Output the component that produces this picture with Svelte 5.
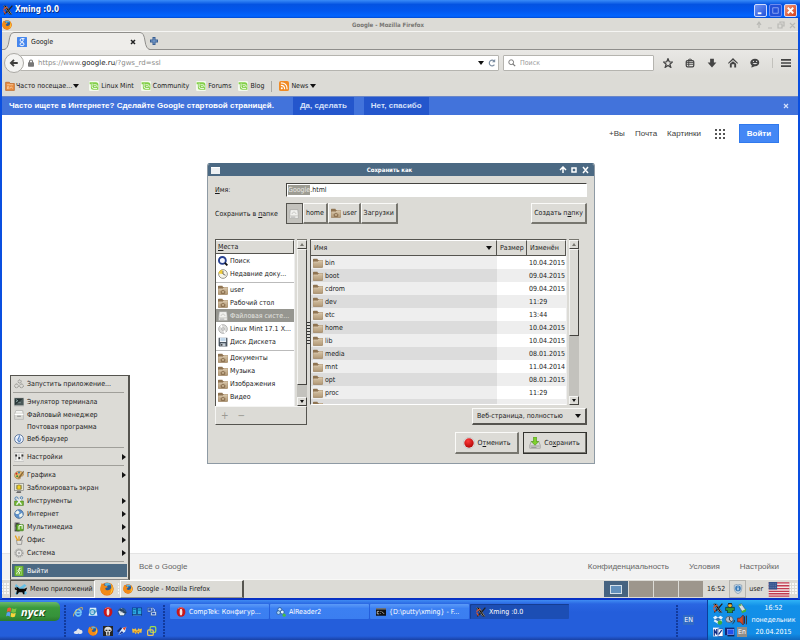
<script>
  const bookmarks = ['Linux Mint', 'Community', 'Forums', 'Blog'];

  const places = [
    { icon: 'search', name: 'Поиск' },
    { icon: 'recent', name: 'Недавние доку...', last: true },
    { icon: 'home-folder', name: 'user' },
    { icon: 'home-folder', name: 'Рабочий стол' },
    { icon: 'drive', name: 'Файловая систе...', selected: true },
    { icon: 'disc', name: 'Linux Mint 17.1 X...' },
    { icon: 'floppy', name: 'Диск Дискета', last: true },
    { icon: 'home-folder', name: 'Документы' },
    { icon: 'home-folder', name: 'Музыка' },
    { icon: 'home-folder', name: 'Изображения' },
    { icon: 'home-folder', name: 'Видео' }
  ];

  // the last row only peeks out from under the edge of the list
  const files = [
    ['bin', '10.04.2015'],
    ['boot', '09.04.2015'],
    ['cdrom', '09.04.2015'],
    ['dev', '11:29'],
    ['etc', '13:44'],
    ['home', '10.04.2015'],
    ['lib', '10.04.2015'],
    ['media', '08.01.2015'],
    ['mnt', '11.04.2014'],
    ['opt', '08.01.2015'],
    ['proc', '11:29'],
    ['', '']
  ];

  const menu = [
    { icon: 'gears', name: 'Запустить приложение...', last: true },
    { icon: 'terminal', name: 'Эмулятор терминала' },
    { icon: 'cabinet', name: 'Файловый менеджер' },
    { name: 'Почтовая программа' },
    { icon: 'compass', name: 'Веб-браузер', last: true },
    { icon: 'sliders', name: 'Настройки', sub: true, last: true },
    { icon: 'palette', name: 'Графика', sub: true },
    { icon: 'lock-screen', name: 'Заблокировать экран' },
    { icon: 'tools', name: 'Инструменты', sub: true },
    { icon: 'globe', name: 'Интернет', sub: true },
    { icon: 'media', name: 'Мультимедиа', sub: true },
    { icon: 'office', name: 'Офис', sub: true },
    { icon: 'gear', name: 'Система', sub: true, last: true },
    { icon: 'exit', name: 'Выйти', active: true }
  ];

  const quick = ['ie', 'outlook', 'opera', 'bird', 'columns', 'network', 'cloud', 'firefox', 'skull', 'rocket', 'bat', 'vmware'];
  const tray = ['xming', 'agent', 'usb', 'dropbox', 'mouse', 'speaker', 'cards', 'monitor'];

  const tasks = [
    { icon: 'opera', name: 'CompTek: Конфигур...' },
    { icon: 'reader', name: 'AlReader2' },
    { icon: 'console', name: '{D:\\putty\\xming} - F...' },
    { icon: 'xming', name: 'Xming :0.0', active: true }
  ];

  let filename = $state('.html');
</script>

{#snippet icon(name)}
  <svg class="icon" viewBox="0 0 16 16" aria-hidden="true"><use href="#{name}" /></svg>
{/snippet}

<svg class="defs" aria-hidden="true">
  <defs>
    <linearGradient id="folderFill" x1="0" y1="0" x2="0" y2="1">
      <stop offset="0" stop-color="#d6c3a6" /><stop offset="1" stop-color="#b39b78" />
    </linearGradient>
    <radialGradient id="redFill" cx=".4" cy=".3" r=".8">
      <stop offset="0" stop-color="#ff3a3a" /><stop offset="1" stop-color="#a80000" />
    </radialGradient>
  </defs>
  <symbol id="xming" viewBox="0 0 16 16">
    <path d="M0 1h6l9 14h-5z" fill="#111" /><path d="M1 1l10 14M5 1l9 14" stroke="#c4c4c4" stroke-width="1" />
    <path d="M15 1L9 8M7 10l-5 5" stroke="#222" stroke-width="2" /><path d="M1 8c1-4 4-5 6-3M1 9l3 5" fill="none" stroke="#e0522c" stroke-width="1.8" />
  </symbol>
  <symbol id="firefox" viewBox="0 0 16 16">
    <circle cx="8" cy="8" r="7.5" fill="#e66a10" /><circle cx="8.5" cy="6.5" r="5" fill="#245c9e" />
    <path d="M5 2c3-2 7-1 8 2-3-1-5 0-6 1z" fill="#60b4dc" />
    <path d="M1 4l1-3 3 3c2 0 3 1 4 2-2 0-3 1-3 2 1 2 4 2 6 0 2-2 1-5 0-7 4 3 4 8 2 11-3 4-9 4-12 0-2-2-2-5-1-8z" fill="#f28a18" />
    <path d="M13 3c3 5 1 9-2 11 2-3 3-7 2-11z" fill="#ffce38" />
  </symbol>
  <symbol id="google" viewBox="0 0 16 16">
    <rect width="16" height="16" rx="1" fill="#4787ed" />
    <ellipse cx="7.5" cy="5" rx="2.5" ry="2.5" fill="none" stroke="#fff" stroke-width="1.5" />
    <ellipse cx="8" cy="11.5" rx="3.2" ry="2.5" fill="none" stroke="#fff" stroke-width="1.5" /><path d="M8 2.5h4M8 7l2 2" stroke="#fff" stroke-width="1.4" />
  </symbol>
  <symbol id="mint" viewBox="0 0 16 16">
    <rect width="16" height="16" rx="2" fill="#f4faee" />
    <path d="M1 2h10q4 0 4 4v8H7q-4 0-4-4V5H1z" fill="#82cf48" />
    <path d="M5 4v5q0 3 3 3h5M7 6h4q2 0 2 2v2M8 9h3" fill="none" stroke="#fff" stroke-width="1.300" />
  </symbol>
  <symbol id="orange-folder" viewBox="0 0 16 16">
    <path d="M1 2h6l1 2h7v11H1z" fill="#e98d41" stroke="#b65c1b" /><path d="M3 6h10M4 13V9h2v4M8 12c0-3 4-3 4 0" stroke="#ffe0bd" fill="none" />
  </symbol>
  <symbol id="rss" viewBox="0 0 16 16">
    <rect width="16" height="16" rx="3" fill="#f08a24" /><circle cx="4.500" cy="11.500" r="1.600" fill="#fff" />
    <path d="M3 7q6 0 6 6M3 3q10 0 10 10" fill="none" stroke="#fff" stroke-width="1.8" />
  </symbol>
  <symbol id="folder" viewBox="0 0 16 16">
    <path d="M0 2q0-1 1-1h6l1 2h7v11q0 1-1 1H1q-1 0-1-1z" fill="#8f7452" />
    <path d="M0 6h8l1-2h7v10q0 1-1 1H1q-1 0-1-1z" fill="url(#folderFill)" stroke="#9a7f5b" stroke-width=".7" /><path d="M1 6.500h7.500l1-2H15" stroke="#e7d8bf" fill="none" />
  </symbol>
  <symbol id="home-folder" viewBox="0 0 16 16">
    <use href="#folder" /><path d="M4 11l4-3 4 3M5.500 10.500v3h5v-3" fill="none" stroke="#7c6040" stroke-width="1.200" />
  </symbol>
  <symbol id="search" viewBox="0 0 16 16">
    <circle cx="7" cy="7" r="5.500" fill="#f4f7ff" stroke="#27408f" stroke-width="3" /><path d="M11 11l4 4" stroke="#111" stroke-width="3" />
  </symbol>
  <symbol id="recent" viewBox="0 0 16 16">
    <circle cx="8" cy="8" r="7" fill="#f5f3e8" stroke="#8d8b82" stroke-width="1.400" /><path d="M8 8L1 7q0-5 6-6z" fill="#f0cc36" /><path d="M8 3v5l4 2" fill="none" stroke="#555" stroke-width="1.300" />
  </symbol>
  <symbol id="drive" viewBox="0 0 16 16">
    <path d="M2 1h12l1 10v4H1v-4z" fill="#f0f0ee" stroke="#a4a4a0" /><path d="M1 11h14M5 8c0-4 6-4 6 0" fill="none" stroke="#b5b5b1" /><path d="M3 13h7" stroke="#888" />
  </symbol>
  <symbol id="disc" viewBox="0 0 16 16">
    <circle cx="8" cy="8" r="7" fill="#dcdcda" stroke="#999" /><path d="M8 8L3 3l3-2zM8 8l5 5-3 2z" fill="#fff" /><circle cx="8" cy="8" r="2" fill="#fff" stroke="#888" />
  </symbol>
  <symbol id="floppy" viewBox="0 0 16 16">
    <path d="M1 1h14v14H2l-1-1z" fill="#49545f" /><path d="M3 1h10v7H3z" fill="#eef3f8" /><path d="M4 3h8M4 5h8" stroke="#7bacd6" /><path d="M4 10h8v5H4z" fill="#c3ccd4" /><path d="M5 11h2v3H5z" fill="#333" />
  </symbol>
  <symbol id="stop" viewBox="0 0 16 16">
    <path d="M5 1h6l4 4v6l-4 4H5l-4-4V5z" fill="#eee" stroke="#bbb" /><circle cx="8" cy="8" r="6.300" fill="url(#redFill)" />
  </symbol>
  <symbol id="save" viewBox="0 0 16 16">
    <path d="M3 6h10l2 5v4H1v-4z" fill="#d9d9d6" stroke="#999" /><path d="M2 12h12M3 14h7" stroke="#888" /><path d="M6 0h4v6h3l-5 5-5-5h3z" fill="#7ed12d" stroke="#4b9613" stroke-width=".8" />
  </symbol>
  <symbol id="gears" viewBox="0 0 16 16">
    <g fill="none" stroke="#82827e" stroke-width="1.5"><circle cx="9" cy="4" r="2.500" stroke-dasharray="1.700 .7" /><circle cx="4" cy="11" r="3" stroke-dasharray="1.700 .7" /><circle cx="12" cy="11" r="3" stroke-dasharray="1.700 .7" /></g>
  </symbol>
  <symbol id="terminal" viewBox="0 0 16 16">
    <rect y="1" width="16" height="14" fill="#b7bab7" /><rect x="1" y="2" width="14" height="11" fill="#273535" /><path d="M3 4l3 2-3 2M7 9h4" stroke="#bcdada" fill="none" /><path d="M1 13L15 2v11z" fill="#6d7b7b" opacity=".5" />
  </symbol>
  <symbol id="cabinet" viewBox="0 0 16 16">
    <path d="M3 1h11l1 5v9H1V6z" fill="#dadad5" stroke="#aaa" /><path d="M3 3h10M1 7h14" stroke="#fff" stroke-width="2" /><path d="M5 9h6v2H5z" fill="#999" />
  </symbol>
  <symbol id="compass" viewBox="0 0 16 16">
    <circle cx="8" cy="8" r="7" fill="#eef5ff" stroke="#48648c" stroke-width="1.300" /><path d="M1 8h14M8 1v14" stroke="#b4c9e7" /><path d="M9 1l2 10-3 2-3-3z" fill="#4777b8" /><path d="M9 3l-2 7 2 1z" fill="#fff" />
  </symbol>
  <symbol id="sliders" viewBox="0 0 16 16">
    <rect y="1" width="16" height="14" rx="1" fill="#f6f6f3" stroke="#aaa" /><path d="M3 3v10M8 3v10M13 3v10" stroke="#777" /><path d="M2 4h3v3H2zM7 8h3v3H7zM12 4h3v3h-3z" fill="#333" />
  </symbol>
  <symbol id="palette" viewBox="0 0 16 16">
    <path d="M1 7c1-6 12-7 14-1 1 5-4 3-5 5 1 4-2 4-5 3-3-1-5-4-4-7z" fill="#e2b96d" stroke="#845525" stroke-width=".7" /><circle cx="4" cy="6" r="1.500" fill="#ce2929" /><circle cx="8" cy="4" r="1.500" fill="#337fba" /><circle cx="5" cy="10" r="1.500" fill="#318b38" /><path d="M15 1L8 10l-2 4 4-2 6-9z" fill="#8a6a3a" />
  </symbol>
  <symbol id="lock-screen" viewBox="0 0 16 16">
    <rect x="1" y="1" width="14" height="11" fill="#ececdc" stroke="#777" /><rect x="3" y="3" width="10" height="7" fill="#aaa98b" /><path d="M5 6a3 3 0 0 1 6 0v4H5z" fill="#f0d222" stroke="#8e7512" /><path d="M5 14h6v1H4z" stroke="#666" />
  </symbol>
  <symbol id="tools" viewBox="0 0 16 16">
    <path d="M1 8h14v7H1z" fill="#75bb35" stroke="#43791c" /><circle cx="4" cy="4" r="2.500" fill="none" stroke="#477fb3" stroke-width="1.500" /><circle cx="12" cy="3" r="2" fill="none" stroke="#477fb3" stroke-width="1.500" /><path d="M5 5l7 9M11 5l-7 9" stroke="#eef1f5" stroke-width="2" />
  </symbol>
  <symbol id="globe" viewBox="0 0 16 16">
    <circle cx="8" cy="8" r="7" fill="#5e91c9" stroke="#345c8d" /><path d="M2 5l4-3 3 3-2 3-4 0zM8 9l5-3 1 5-5 3z" fill="#edf3ec" />
  </symbol>
  <symbol id="media" viewBox="0 0 16 16">
    <rect x="1" y="1" width="8" height="14" fill="#444" /><path d="M2 2v12M8 2v12" stroke="#eee" stroke-dasharray="1 1" /><rect x="4" y="4" width="11" height="10" rx="1" fill="#64ad2c" stroke="#3d7919" /><path d="M8 12V6l5-1v6" fill="none" stroke="#fff" stroke-width="1.600" />
  </symbol>
  <symbol id="office" viewBox="0 0 16 16">
    <path d="M4 8h9l-1 7H5z" fill="#e3e1db" stroke="#777" /><path d="M6 9L2 1M8 9V2" stroke="#e6a01e" stroke-width="2" /><path d="M10 9l4-8" stroke="#555" stroke-width="1.600" />
  </symbol>
  <symbol id="gear" viewBox="0 0 16 16">
    <circle cx="8" cy="8" r="6.300" fill="none" stroke="#999" stroke-width="2" stroke-dasharray="2 1.300" /><circle cx="8" cy="8" r="4.800" fill="#e8e8e6" stroke="#8b8b88" /><circle cx="8" cy="8" r="1.800" fill="#aaa" />
  </symbol>
  <symbol id="exit" viewBox="0 0 16 16">
    <rect x="1" width="14" height="16" rx="1" fill="#69b32b" /><path d="M4 2h8v12H4z" fill="none" stroke="#a9d684" /><path d="M8 5l-2 3 3 2-1 3M8 6l3 2M7 10l-3 2" fill="none" stroke="#fff" stroke-width="1.500" /><circle cx="9" cy="4" r="1.400" fill="#fff" />
  </symbol>
  <symbol id="mouse-x" viewBox="0 0 20 16">
    <path d="M3 0l5 5 7-5 3 2-5 5 6 6-3 3-6-6-6 6-3-2 5-6-5-5z" fill="#68c1e6" /><path d="M1 5l3-1 4 3h7l4-2-2 5-2 1v4h-2l-1-3H7l-2 3H3l1-6-3-1z" fill="#080808" /><path d="M2 5l2 1" stroke="#fff" />
  </symbol>
  <symbol id="shield" viewBox="0 0 16 16">
    <path d="M8 0l6 2v6q0 5-6 8-6-3-6-8V2z" fill="#c9d8e7" stroke="#7890a6" /><circle cx="8" cy="7" r="4.500" fill="#397bb9" /><path d="M8 4v1M8 6v4" stroke="#fff" stroke-width="1.800" />
  </symbol>
  <symbol id="ie" viewBox="0 0 16 16">
    <path d="M13 11c-3 6-11 3-9-4 2-5 9-3 9 2H5" fill="none" stroke="#70c4fa" stroke-width="2.600" /><path d="M1 15C-1 11 9 0 15 1c1 1 0 3-1 4" fill="none" stroke="#eec446" stroke-width="1.400" />
  </symbol>
  <symbol id="outlook" viewBox="0 0 16 16">
    <path d="M3 1h10l2 13H1z" fill="#dceffa" /><circle cx="7" cy="8" r="4" fill="none" stroke="#3897c9" stroke-width="2" /><path d="M5 8h8v-4" stroke="#146aa5" fill="none" />
  </symbol>
  <symbol id="opera" viewBox="0 0 16 16">
    <ellipse cx="8" cy="8" rx="7" ry="7.700" fill="#c91719" /><ellipse cx="8" cy="8" rx="2.200" ry="5.400" fill="#f5e3e1" /><path d="M3 3q4-4 9-1" stroke="#ff8c7e" fill="none" />
  </symbol>
  <symbol id="bird" viewBox="0 0 16 16">
    <circle cx="8" cy="8" r="7" fill="#27568e" /><path d="M2 7l5-5 6 5-2 6H5z" fill="#dfe8f0" /><path d="M3 5q5-5 10 2l3 2-5 1" fill="#274263" /><path d="M5 8h5" stroke="#8ca0b3" />
  </symbol>
  <symbol id="columns" viewBox="0 0 16 16">
    <path d="M0 1h16v13H0z" fill="#022c77" /><path d="M1 2h6v9H1zM9 2h6v9H9z" fill="#2baae2" /><path d="M2 4h4M10 5h4M2 8h3" stroke="#06457a" /><path d="M1 13h14" stroke="#7dd8f9" />
  </symbol>
  <symbol id="network" viewBox="0 0 16 16">
    <path d="M1 1h8v7H1zM6 7h9v7H6z" fill="#d5e6f9" stroke="#274f92" /><path d="M2 2h5v4H2zM8 9h5v3H8z" fill="#1b4cc2" /><path d="M9 2l3 2v3" stroke="#fff" fill="none" />
  </symbol>
  <symbol id="cloud" viewBox="0 0 16 16">
    <path d="M1 11q1-4 4-3 3-7 6-2 5 0 4 5-3 3-6 1-5 2-8-1z" fill="#dfe4ee" />
  </symbol>
  <symbol id="skull" viewBox="0 0 16 16">
    <rect width="16" height="16" fill="#252525" /><path d="M2 7q0-6 6-6 6 0 6 6l-3 3v5H5v-5z" fill="#ddd" /><path d="M4 7h3M9 7h3M8 9v5" stroke="#222" stroke-width="2" />
  </symbol>
  <symbol id="rocket" viewBox="0 0 16 16">
    <path d="M2 14L8 3l7-2-2 8-7 4z" fill="#dcedf9" /><path d="M15 1L9 3l3 4z" fill="#e14328" /><path d="M2 14l6-6 2 3z" fill="#132f91" /><path d="M1 9l6-6" stroke="#172c6b" stroke-width="3" />
  </symbol>
  <symbol id="bat" viewBox="0 0 16 16">
    <path d="M0 4l4 1 1-2 3 4 3-4 1 2 4-1-1 7-3-1-2 3-2-3-2 3-2-3-3 1z" fill="#f3c23d" /><path d="M3 8l4 2 5-2" stroke="#a45318" fill="none" />
  </symbol>
  <symbol id="vmware" viewBox="0 0 16 16">
    <rect x="5" y="1" width="9" height="9" rx="2" fill="none" stroke="#9fdd4f" stroke-width="2" /><rect x="1" y="6" width="9" height="9" rx="2" fill="none" stroke="#e7c45a" stroke-width="2" />
  </symbol>
  <symbol id="reader" viewBox="0 0 16 16">
    <circle cx="6" cy="4" r="3" fill="#cce8fc" stroke="#164887" /><circle cx="4" cy="9" r="3" fill="#aad4f6" stroke="#164887" /><circle cx="10" cy="8" r="3" fill="#e0f5ff" stroke="#164887" /><circle cx="13" cy="13" r="2.500" fill="#45be43" />
  </symbol>
  <symbol id="console" viewBox="0 0 16 16">
    <rect y="2" width="16" height="12" fill="#111" /><path d="M0 2h16v2H0z" fill="#888" /><path d="M5 7H2v4h3M7 7v1M7 10v1M9 7l4 4" stroke="#fff" fill="none" />
  </symbol>
  <symbol id="agent" viewBox="0 0 16 16">
    <circle cx="8" cy="4" r="3.500" fill="#f0b32b" stroke="#122" /><path d="M1 7h14v5h-3v4H4v-4H1z" fill="#2d9638" stroke="#122" /><path d="M5 1h6" stroke="#222" stroke-width="2" />
  </symbol>
  <symbol id="usb" viewBox="0 0 16 16">
    <path d="M2 4l5-3 7 10-5 4z" fill="#d4dde1" stroke="#4c5c60" /><path d="M7 13l8-4-1 5-6 2zM3 1l5 2-4 2z" fill="#43b23e" />
  </symbol>
  <symbol id="dropbox" viewBox="0 0 16 16">
    <path d="M4 1l4 3 4-3 4 3-3 3 2 3-7 4-7-4 2-3-3-3z" fill="#e4f1fb" /><circle cx="11" cy="12" r="3.600" fill="#3cae3b" /><path d="M3 7l5-3 5 3-5 3z" fill="#2d73b1" />
  </symbol>
  <symbol id="mouse" viewBox="0 0 16 16">
    <ellipse cx="7" cy="7" rx="6" ry="5" fill="#bac1c9" stroke="#36465c" /><path d="M7 3v5l4 3M12 14q4-2 3-6" stroke="#333" fill="none" stroke-width="1.500" />
  </symbol>
  <symbol id="speaker" viewBox="0 0 16 16">
    <path d="M1 5h4l5-5v16l-5-5H1z" fill="#d54a29" stroke="#551b1b" /><path d="M12 2v12M15 1v14" stroke="#48211d" stroke-width="1.500" />
  </symbol>
  <symbol id="cards" viewBox="0 0 16 16">
    <rect y="1" width="10" height="14" fill="#f6f7ff" /><rect x="8" y="3" width="8" height="12" fill="#fff" stroke="#113c9b" /><path d="M2 14V4l4 8V3M9 12l5-7" stroke="#112d85" fill="none" stroke-width="2" />
  </symbol>
  <symbol id="monitor" viewBox="0 0 16 16">
    <rect y="1" width="15" height="12" fill="#142679" /><rect x="4" y="4" width="10" height="8" fill="#2152ed" stroke="#8da6ff" /><path d="M4 14h11" stroke="#101744" stroke-width="2" />
  </symbol>
</svg>

<div class="screen">
  <header class="xp-title">
    {@render icon('xming')}
    <h1>Xming :0.0</h1>
    <button class="xp-btn" aria-label="Свернуть"><svg viewBox="0 0 12 12"><path d="M3 9h4" stroke="#fff" stroke-width="2" /></svg></button>
    <button class="xp-btn dim" aria-label="Развернуть"><svg viewBox="0 0 12 12"><path d="M3 3h6v6H3z" fill="none" stroke="#8fa7f2" stroke-width="1" /></svg></button>
    <button class="xp-btn red" aria-label="Закрыть"><svg viewBox="0 0 12 12"><path d="M3 3l6 6M9 3l-6 6" stroke="#fff" stroke-width="2" /></svg></button>
  </header>

  <main class="desktop">
    <div class="ff-title">
      {@render icon('firefox')}
      <h2>Google - Mozilla Firefox</h2>
      <svg class="ff-controls" viewBox="0 0 42 10" fill="none" stroke="#b9b9b5" stroke-width="1.200">
        <path d="M3 8V2M1 5l2-3 2 3M12 8h4M22 4h4v4h-4zM24 3V2h4v4h-2M34 3l5 5M39 3l-5 5" />
      </svg>
    </div>

    <div class="tabs">
      <svg class="tab-side" viewBox="0 0 10 18"><path d="M0 18Q4 17 5 9Q6 0 10 0V18z" fill="#eeedea" /><path d="M0 17.500Q4 17 5 9Q6 .5 10 .5" fill="none" stroke="#8f8e8b" /></svg>
      <div class="tab">{@render icon('google')}<span>Google</span><button class="plain" aria-label="Закрыть вкладку"><svg viewBox="0 0 6 6"><path d="M1 1l4 4M5 1L1 5" stroke="#222" stroke-width="1.500" /></svg></button></div>
      <svg class="tab-side" viewBox="0 0 10 18"><path d="M10 18Q6 17 5 9Q4 0 0 0V18z" fill="#eeedea" /><path d="M10 17.500Q6 17 5 9Q4 .5 0 .5" fill="none" stroke="#8f8e8b" /></svg>
      <button class="plain new-tab" aria-label="Новая вкладка"><svg viewBox="0 0 8 8"><path d="M4 0v8M0 4h8" stroke="#395f92" stroke-width="3" /><path d="M4 1v6M1 4h6" stroke="#7fa2cf" /></svg></button>
    </div>

    <nav class="nav">
      <button class="back" aria-label="Назад"><svg viewBox="0 0 16 16"><path d="M8 3L3 8l5 5M3 8h11" fill="none" stroke="#3e3e3c" stroke-width="3" /></svg></button>
      <div class="url">
        <svg class="lock" viewBox="0 0 8 10"><path d="M2 5V3a2 2 0 0 1 4 0v2" fill="none" stroke="#777" stroke-width="1.500" /><rect x="0" y="4" width="8" height="6" rx="1" fill="#777" /></svg>
        <span>https://www.<b>google.ru</b>/?gws_rd=ssl</span>
        <i class="down"></i>
        <button class="plain" aria-label="Обновить"><svg viewBox="0 0 10 10"><path d="M8 3A3.500 3.500 0 1 0 8 7" fill="none" stroke="#7d8fa3" stroke-width="1.500" /><path d="M9 0v4H5z" fill="#7d8fa3" /></svg></button>
      </div>
      <label class="find">
        <svg viewBox="0 0 10 10"><circle cx="4" cy="4" r="3" fill="none" stroke="#777" stroke-width="1.200" /><path d="M6 6l3 3" stroke="#777" stroke-width="1.500" /></svg>
        <input placeholder="Поиск" aria-label="Поиск" />
      </label>
      <div class="tools">
        <button class="plain" aria-label="Закладка"><svg viewBox="0 0 16 16"><path d="M8 1l2 5 5 .5-4 3.500 1.500 5L8 12l-4.500 3L5 10 1 6.500 6 6z" fill="none" stroke="#444" stroke-width="2" /></svg></button>
        <button class="plain" aria-label="Список закладок"><svg viewBox="0 0 16 16"><rect x="2" y="4" width="12" height="10" rx="2" fill="none" stroke="#444" stroke-width="2" /><path d="M5 3q3-3 6 0M2 7h12M2 10h12M6 5v8" stroke="#444" stroke-width="1.500" fill="none" /></svg></button>
        <button class="plain" aria-label="Загрузки"><svg viewBox="0 0 16 16"><path d="M5 1h6v6h4l-7 8-7-8h4z" fill="#444" /></svg></button>
        <button class="plain" aria-label="Домой"><svg viewBox="0 0 16 16"><path d="M8 0l8 8-1 1-7-6-7 6-1-1zM3 9l5-4 5 4v6h-3v-5H6v5H3z" fill="#444" /></svg></button>
        <button class="plain" aria-label="Чат"><svg viewBox="0 0 16 16"><path d="M8 1c9 0 9 12 0 12-2 0-4 2-6 2l1-3C-2 8 1 1 8 1z" fill="#444" /><path d="M4 8q4 4 8 0z" fill="#ddd" /><circle cx="5.500" cy="5.500" r="1" fill="#ddd" /><circle cx="10.500" cy="5.500" r="1" fill="#ddd" /></svg></button>
        <button class="plain" aria-label="Меню"><svg viewBox="0 0 16 16"><path d="M0 3h16M0 8h16M0 13h16" stroke="#444" stroke-width="2.500" /></svg></button>
      </div>
    </nav>

    <div class="bookmarks">
      <a class="frequent" href="#top">{@render icon('orange-folder')}Часто посещае...<i class="down"></i></a>
      {#each bookmarks as name}
        <a href="#mint">{@render icon('mint')}{name}</a>
      {/each}
      <span class="divider"></span>
      <a href="#news">{@render icon('rss')}News<i class="down"></i></a>
    </div>

    <div class="promo">
      <strong>Часто ищете в Интернете? Сделайте Google стартовой страницей.</strong>
      <button>Да, сделать</button>
      <button>Нет, спасибо</button>
      <button class="promo-close" aria-label="Закрыть"><svg viewBox="0 0 6 6"><path d="M1 1l4 4M5 1L1 5" stroke="#d5e0fa" stroke-width="1.200" /></svg></button>
    </div>

    <div class="page">
      <div class="page-links">
        <a href="#plus">+Вы</a>
        <a href="#mail">Почта</a>
        <a href="#images">Картинки</a>
        <button class="plain apps" aria-label="Приложения"><svg viewBox="0 0 10 10" fill="#555"><path d="M0 0h2v2H0zM4 0h2v2H4zM8 0h2v2H8zM0 4h2v2H0zM4 4h2v2H4zM8 4h2v2H8zM0 8h2v2H0zM4 8h2v2H4zM8 8h2v2H8z" /></svg></button>
        <button class="signin">Войти</button>
      </div>
    </div>

    <footer class="page-footer">
      <a href="#about">Всё о Google</a>
      <a class="push" href="#privacy">Конфиденциальность</a>
      <a href="#terms">Условия</a>
      <a href="#settings">Настройки</a>
    </footer>

    <div class="panel">
      <span class="grip"></span>
      <div class="menu-anchor">
        <div class="app-menu">
          {#each menu as item}
            <button class:active={item.active} class:bare={!item.icon}>
              <span class="slot">{#if item.icon}{@render icon(item.icon)}{/if}</span>
              {item.name}
              {#if item.sub}<i class="right"></i>{/if}
            </button>
            {#if item.last}<hr />{/if}
          {/each}
        </div>
        <button class="menu-btn"><svg viewBox="0 0 20 16"><use href="#mouse-x" /></svg>Меню приложений</button>
      </div>
      <button class="launcher" aria-label="Firefox">{@render icon('firefox')}</button>
      <span class="grip thin"></span>
      <button class="panel-task">{@render icon('firefox')}Google - Mozilla Firefox</button>
      <div class="pager"><span class="current"><i></i></span><span></span><span></span><span></span></div>
      <span class="clock">16:52</span>
      <button class="shield" aria-label="Обновления">{@render icon('shield')}</button>
      <span class="user">user</span>
      <svg class="flag" viewBox="0 0 22 16"><path d="M0 0h22v16H0z" fill="#f3e6e6" /><path d="M0 1h22M0 4h22M0 7h22M0 10h22M0 12.500h22M0 15h22" stroke="#c23b50" stroke-width="1.400" /><path d="M0 0h9v8H0z" fill="#34528c" /><path d="M1 2h7M1 4h7M1 6h7" stroke="#8ba2c9" stroke-width=".7" stroke-dasharray="1 1" /></svg>
      <span class="grip"></span>
    </div>

    <form class="dialog" onsubmit={(e) => e.preventDefault()}>
      <div class="dialog-title">
        <i class="win-icon"></i>
        <h2>Сохранить как</h2>
        <svg viewBox="0 0 30 8" fill="none" stroke="#fff" stroke-width="1.500"><path d="M4 7V1M1 4l3-3 3 3M13 2h4v4h-4zM24 1l5 6M29 1l-5 6" /></svg>
      </div>

      <div class="dialog-body">
        <div class="field-row">
          <label for="fname"><u>И</u>мя:</label>
          <div class="text-box"><mark>Google</mark><input id="fname" bind:value={filename} /></div>
        </div>
        <div class="field-row path-row">
          <span class="caption">Сохранить в <u>п</u>апке</span>
          <div class="path">
            <button type="button" class="pressed" aria-label="Файловая система">{@render icon('drive')}</button>
            <button type="button">home</button>
            <button type="button">{@render icon('home-folder')}user</button>
            <button type="button">Загрузки</button>
          </div>
          <button type="button" class="new-folder"><span>Создать п<u>а</u>пку</span></button>
        </div>

        <div class="panes">
          <div class="places">
            <div class="places-top">
              <div class="list">
                <div class="head"><u>М</u>еста</div>
                <ul>
                  {#each places as place}
                    <li class:selected={place.selected} class:last={place.last}>{@render icon(place.icon)}{place.name}</li>
                  {/each}
                </ul>
              </div>
              <div class="scroll"><i class="arrow up"></i><i class="thumb long"></i><i class="arrow"></i></div>
            </div>
            <div class="places-tools">
              <button type="button" class="plain" aria-label="Добавить">+</button>
              <button type="button" class="plain" aria-label="Удалить">−</button>
            </div>
          </div>
          <div class="splitter"></div>
          <div class="files">
            <div class="table-box">
              <table>
                <thead>
                  <tr><th>Имя<i class="down"></i></th><th class="size">Размер</th><th class="date">Изменён</th></tr>
                </thead>
                <tbody>
                  {#each files as [name, date]}
                    <tr><td class="name"><span>{@render icon('folder')}{name}</span></td><td></td><td>{date}</td></tr>
                  {/each}
                </tbody>
              </table>
            </div>
            <div class="scroll"><i class="arrow up"></i><i class="thumb"></i><i class="arrow"></i></div>
          </div>
        </div>

        <div class="actions">
          <div class="combo">
            <select aria-label="Тип файла"><option>Веб-страница, полностью</option></select>
            <i class="down"></i>
          </div>
          <button type="button">{@render icon('stop')}<span>О<u>т</u>менить</span></button>
          <button class="default">{@render icon('save')}<span>Со<u>х</u>ранить</span></button>
        </div>
      </div>
    </form>
  </main>

  <div class="taskbar">
    <button class="start">
      <svg viewBox="0 0 16 16"><path d="M2 3q3-2 5 0L6 8Q4 6 1 8z" fill="#ef5b32" /><path d="M8 3q3 2 6 0l-1 5q-3 2-6 0z" fill="#7ac441" /><path d="M1 9q3-2 5 0l-1 5q-3-2-5 0z" fill="#58a2f2" /><path d="M7 9q3 2 6 0l-1 5q-3 2-6 0z" fill="#fbd43c" /></svg>
      пуск
    </button>
    <span class="dots"></span>
    <div class="quick">
      {#each quick as name}
        <button class="plain" aria-label={name}>{@render icon(name)}</button>
      {/each}
    </div>
    <span class="dots"></span>
    <div class="tasks">
      {#each tasks as task}
        <button class:active={task.active}>{@render icon(task.icon)}<span>{task.name}</span></button>
      {/each}
    </div>
    <span class="dots"></span>
    <span class="lang">EN</span>
    <div class="tray">
      <div class="tray-icons">
        {#each tray as name}
          {@render icon(name)}
        {/each}
        <span class="en">En</span>
      </div>
      <div class="tray-clock"><span>16:52</span><span>понедельник</span><span>20.04.2015</span></div>
    </div>
  </div>
</div>

<style>
  :global(body) {
    margin: 0;
  }

  .screen {
    min-height: 100vh;
    display: flex;
    flex-direction: column;
    font: 7px/10px "DejaVu Sans Condensed", "DejaVu Sans", sans-serif;
    color: #1a1a1a;
    background: #0a4fe0;
  }

  .screen * {
    box-sizing: border-box;
  }

  .defs {
    position: absolute;
    width: 0;
    height: 0;
  }

  button, input, select {
    font: inherit;
    color: inherit;
    margin: 0;
    padding: 0;
    border: 0;
    border-radius: 0;
    background: none;
    white-space: nowrap;
  }

  svg {
    display: block;
    flex: none;
  }

  .icon {
    width: 10px;
    height: 10px;
  }

  h1, h2 {
    margin: 0;
    font-size: inherit;
  }

  a {
    color: inherit;
    text-decoration: none;
    white-space: nowrap;
  }

  .plain {
    display: flex;
    align-items: center;
    justify-content: center;
  }

  /* small triangles */
  .down {
    border: 3px solid transparent;
    border-top: 4px solid #111;
    border-bottom: 0;
  }

  .right {
    margin-left: auto;
    border: 3px solid transparent;
    border-left: 4px solid #111;
    border-right: 0;
  }

  /* Xming window title */
  .xp-title {
    height: 18px;
    display: flex;
    align-items: center;
    gap: 2px;
    padding: 2px 3px 0;
    background: linear-gradient(#3a8cf8, #0453e2 25%, #0257ee 60%, #0265ff 90%, #0148d0);
    color: #fff;
  }

  .xp-title h1 {
    flex: 1;
    font: bold 8px/12px "DejaVu Sans Condensed", sans-serif;
    text-shadow: 1px 1px #0a2f8a;
  }

  .xp-btn {
    width: 13px;
    height: 13px;
    border: 1px solid #cfdcff;
    border-radius: 2px;
    background: linear-gradient(135deg, #6f94f4, #2353da);
  }

  .xp-btn.dim {
    border-color: #6c8cf0;
    background: #2350d8;
  }

  .xp-btn.red {
    background: linear-gradient(135deg, #f09a7d, #d6401a);
  }

  .desktop {
    flex: 1;
    position: relative;
    display: flex;
    flex-direction: column;
    margin: 0 2px;
    border-bottom: 1px solid #0831c4;
    background: #fff;
  }

  /* Firefox */
  .ff-title {
    height: 14px;
    display: flex;
    align-items: center;
    background: #dcdbd6;
    border-bottom: 1px solid #f5f5f3;
  }

  .ff-title h2 {
    flex: 1;
    text-align: center;
    color: #777672;
    padding-left: 8px;
    font: bold 6px/10px "DejaVu Sans Condensed", sans-serif;
  }

  .ff-controls {
    width: 42px;
    height: 10px;
  }

  .tabs {
    height: 18px;
    display: flex;
    padding-left: 2px;
    background: linear-gradient(#dcdbd6 17px, #8f8e8b 17px);
  }

  .tab-side {
    width: 10px;
    height: 18px;
  }

  .tab {
    width: 126px;
    display: flex;
    align-items: center;
    gap: 4px;
    padding: 0 4px 0 3px;
    background: #eeedea;
    border-top: 1px solid #8f8e8b;
  }

  .tab button {
    margin-left: auto;
  }

  .tab button svg {
    width: 6px;
    height: 6px;
  }

  .new-tab svg {
    width: 8px;
    height: 8px;
  }

  .nav {
    height: 26px;
    display: flex;
    align-items: center;
    padding: 0 7px 0 2px;
    background: linear-gradient(#e9e8e5, #dcdbd6);
  }

  .back {
    width: 20px;
    height: 20px;
    display: grid;
    place-items: center;
    border: 1px solid #aaa9a4;
    border-radius: 50%;
    background: #f4f4f2;
    z-index: 1;
  }

  .back svg {
    width: 10px;
    height: 10px;
  }

  .url, .find {
    height: 16px;
    display: flex;
    align-items: center;
    border: 1px solid #b5b4af;
    border-radius: 1px;
    background: #fff;
    color: #8a8a88;
  }

  .url {
    flex: 1;
    gap: 4px;
    margin-left: -4px;
    padding: 0 2px 0 7px;
    font-family: "DejaVu Sans", sans-serif;
  }

  .url span {
    flex: 1;
  }

  .url b {
    color: #1a1a1a;
    font-weight: normal;
  }

  .lock {
    width: 6px;
    height: 8px;
  }

  .url button svg, .find svg {
    width: 8px;
    height: 8px;
  }

  .find {
    width: 151px;
    gap: 4px;
    margin-left: 4px;
    padding: 0 4px;
  }

  .find input {
    flex: 1;
    min-width: 0;
    outline: 0;
  }

  .find input::placeholder {
    color: #999;
    opacity: 1;
  }

  .tools {
    width: 128px;
    display: flex;
    justify-content: space-between;
    margin-left: 9px;
  }

  .tools svg {
    width: 10px;
    height: 10px;
  }

  .tools button:last-child {
    padding-left: 8px;
    border-left: 1px solid #c2c1bc;
  }

  .bookmarks {
    height: 20px;
    display: flex;
    align-items: center;
    gap: 7px;
    padding-left: 3px;
    background: #dcdbd6;
  }

  .bookmarks a {
    display: flex;
    align-items: center;
    gap: 2px;
  }

  .bookmarks .frequent {
    gap: 1px;
    margin-right: 3px;
  }

  .divider {
    width: 1px;
    height: 11px;
    background: #aaa9a4;
  }

  .promo {
    height: 19px;
    display: flex;
    align-items: stretch;
    gap: 10px;
    padding-left: 7px;
    background: #4273db;
    border-top: 1px solid #6a86c8;
    color: #fff;
    font: bold 8px/18px "Liberation Sans", sans-serif;
  }

  .promo strong {
    margin-right: 9px;
  }

  .promo button {
    padding: 0 7px;
    background: #2456cc;
    color: #d5e0fa;
  }

  .promo .promo-close {
    margin-left: auto;
    background: none;
    padding-right: 9px;
  }

  .promo-close svg {
    width: 6px;
    height: 6px;
  }

  .page {
    flex: 1;
    font: 8px/10px "Liberation Sans", sans-serif;
    color: #404040;
  }

  .page-links {
    display: flex;
    justify-content: flex-end;
    align-items: center;
    gap: 10px;
    padding: 9px 19px;
  }

  .apps {
    margin: 0 4px;
  }

  .apps svg {
    width: 10px;
    height: 10px;
  }

  .signin {
    width: 40px;
    height: 19px;
    background: #4387f5;
    border: 1px solid #3079ed;
    color: #fff;
    font-weight: bold;
  }

  .page-footer {
    height: 26px;
    display: flex;
    align-items: center;
    gap: 20px;
    padding: 0 19px 0 137px;
    background: #f2f2f2;
    border-top: 1px solid #e4e4e4;
    color: #666;
    font: 8px/10px "Liberation Sans", sans-serif;
  }

  .push {
    margin-left: auto;
  }

  /* Xfce panel */
  .panel {
    height: 19px;
    display: flex;
    align-items: stretch;
    background: #dcdbd6;
    border-top: 1px solid #f8f8f6;
  }

  .grip {
    width: 8px;
    margin: 3px 0;
    background: radial-gradient(circle at 1px 1px, #f8f8f6 1px, transparent 1px) 2px 0 / 3px 3px;
  }

  .grip.thin {
    width: 2px;
  }

  .menu-anchor {
    position: relative;
    display: flex;
  }

  .menu-btn {
    width: 85px;
    display: flex;
    align-items: center;
    gap: 2px;
    padding-left: 3px;
    border: 1px solid #55544f;
    border-right-color: #fff;
    border-bottom-color: #fff;
    background: #c3c2bd;
  }

  .menu-btn svg {
    width: 14px;
    height: 11px;
  }

  .launcher {
    width: 23px;
    display: grid;
    place-items: center;
  }

  .launcher .icon {
    width: 14px;
    height: 14px;
  }

  .panel-task {
    width: 124px;
    display: flex;
    align-items: center;
    gap: 4px;
    padding-left: 2px;
    border: 1px solid #fff;
    border-right: 2px solid #55544f;
    border-bottom-color: #99988f;
  }

  .pager {
    display: flex;
    gap: 1px;
    margin: 1px 4px 1px auto;
  }

  .pager span {
    width: 24px;
    display: grid;
    place-items: center;
    background: #9d968c;
  }

  .pager .current {
    background: #466380;
  }

  .pager i {
    width: 12px;
    height: 9px;
    border: 1px solid #d4e0ea;
    background: #6290bc;
  }

  .clock, .user {
    align-self: center;
  }

  .shield {
    width: 17px;
    display: grid;
    place-items: center;
    margin: 0 3px 0 4px;
    border: 1px solid #b5b4af;
  }

  .flag {
    width: 22px;
    height: 15px;
    align-self: center;
    margin-left: 5px;
  }

  .app-menu {
    position: absolute;
    left: 0;
    bottom: 100%;
    width: 120px;
    padding: 1px 1px 2px;
    border: 1px solid #55544f;
    border-right-width: 2px;
    border-bottom-color: #888;
    background: #dcdbd6;
    z-index: 2;
  }

  .app-menu button {
    width: 100%;
    height: 13px;
    display: flex;
    align-items: center;
    padding: 0 1px 0 2px;
  }

  .app-menu .bare {
    height: 11px;
  }

  .app-menu .active {
    background: #4b6983;
    color: #fff;
  }

  .slot {
    width: 13px;
  }

  .app-menu hr {
    margin: 2px 3px 2px 1px;
    height: 1px;
    border: 0;
    background: #a09f9a;
  }

  /* save dialog */
  .dialog {
    position: absolute;
    left: 205px;
    top: 145px;
    width: 388px;
    border: 1px solid #8e9aa4;
    border-top-color: #4b6983;
    border-radius: 3px 3px 0 0;
    background: #dcdbd6;
    overflow: hidden;
  }

  .dialog-title {
    height: 12px;
    display: flex;
    align-items: center;
    padding: 0 5px 0 3px;
    background: #4b6983;
    color: #fff;
  }

  .dialog-title h2 {
    flex: 1;
    text-align: center;
    font: bold 6px/10px "DejaVu Sans Condensed", sans-serif;
  }

  .dialog-title svg {
    width: 30px;
    height: 8px;
  }

  .win-icon {
    width: 9px;
    height: 7px;
    background: #eef1f3;
    border-top: 1px solid #fff;
  }

  .dialog-body {
    padding: 7px 7px 9px;
  }

  .field-row {
    display: flex;
    align-items: center;
  }

  .field-row label, .caption {
    width: 71px;
  }

  .text-box {
    flex: 1;
    height: 14px;
    display: flex;
    align-items: center;
    padding-left: 1px;
    border: 1px solid #fff;
    border-top: 1px solid #44433f;
    border-left: 1px solid #44433f;
    background: #fff;
  }

  .text-box mark {
    background: #9d9c93;
    color: #e8e8e4;
  }

  .text-box input {
    flex: 1;
    min-width: 0;
    outline: 0;
  }

  .path-row {
    margin-top: 6px;
  }

  .path {
    display: flex;
  }

  .path button, .new-folder, .actions button {
    height: 21px;
    display: flex;
    align-items: center;
    justify-content: center;
    gap: 2px;
    padding: 0 2px;
    border: 1px solid #fafaf8;
    border-right: 2px solid #77766f;
    border-bottom: 2px solid #77766f;
  }

  .path .pressed {
    padding: 0 3px 0 2px;
    border: 1px solid #55544f;
    background: #c3c2bd;
  }

  .new-folder {
    margin-left: auto;
  }

  .panes {
    display: flex;
    margin-top: 15px;
  }

  .places-top {
    height: 167px;
    display: flex;
    gap: 2px;
  }

  .list {
    width: 80px;
    border: 1px solid #55544f;
    border-width: 1px 1px 0;
    border-right-color: #eee;
    background: #fff;
    overflow: hidden;
  }

  .head, th {
    height: 14px;
    border: 1px solid #55544f;
    border-left: 0;
    border-top-color: #fff;
    background: #dcdbd6;
    font-weight: normal;
    text-align: left;
  }

  .head {
    padding: 1px 2px;
  }

  .list ul {
    margin: 0;
    padding: 0;
    list-style: none;
  }

  .list li {
    height: 13px;
    display: flex;
    align-items: center;
    gap: 2px;
    padding-left: 2px;
    white-space: nowrap;
  }

  .list .last {
    height: 16px;
    padding-bottom: 2px;
    border-bottom: 1px solid #bbb;
  }

  .list .selected {
    background: #969690;
    color: #e5e5e0;
  }

  .scroll {
    width: 10px;
    display: flex;
    flex-direction: column;
    border-top: 1px solid #77766f;
    background: #c3c2bd;
  }

  .arrow {
    height: 9px;
    display: grid;
    place-items: center;
    margin-top: auto;
    border: 1px solid #f5f5f3;
    border-right-color: #44433f;
    border-bottom-color: #44433f;
    background: #dcdbd6;
  }

  .arrow::after {
    content: "";
    border: 2px solid transparent;
    border-top: 3px solid #111;
    border-bottom: 0;
  }

  .arrow.up {
    margin-top: 0;
  }

  .arrow.up::after {
    border-top: 0;
    border-bottom: 3px solid #77766f;
  }

  .thumb {
    height: 87px;
    border: 1px solid #f5f5f3;
    border-right-color: #44433f;
    border-bottom-color: #44433f;
    background: #dcdbd6;
  }

  .thumb.long {
    height: 136px;
  }

  .places-tools {
    height: 19px;
    display: flex;
    gap: 9px;
    padding-left: 5px;
    border: 1px solid #f5f5f3;
    border-right: 1px solid #55544f;
    border-bottom: 1px solid #55544f;
    color: #9a9992;
    font-size: 10px;
  }

  .splitter {
    width: 3px;
    height: 22px;
    margin-top: 83px;
    background: linear-gradient(#333 1px, transparent 1px) 1px 0 / 2px 3px;
  }

  .files {
    flex: 1;
    height: 166px;
    display: flex;
    gap: 2px;
    padding-right: 8px;
  }

  .table-box {
    flex: 1;
    border: 1px solid #55544f;
    border-width: 1px 1px 0;
    border-right-color: #eee;
    border-bottom: 1px solid #fff;
    background: #fff;
    overflow: hidden;
  }

  table {
    width: 100%;
    border-spacing: 0;
    table-layout: fixed;
  }

  th {
    height: 16px;
    padding: 0 3px;
  }

  th .down {
    float: right;
    margin: 3px 1px;
  }

  .size {
    width: 30px;
  }

  .date {
    width: 39px;
  }

  td {
    height: 13px;
    padding: 0 2px;
  }

  .name {
    background: #eee;
  }

  .name span {
    display: flex;
    align-items: center;
    gap: 2px;
  }

  tbody tr:nth-child(even) td {
    background: #eee;
  }

  tbody tr:nth-child(even) .name {
    background: #dcdcdc;
  }

  .actions {
    display: flex;
    flex-wrap: wrap;
    justify-content: flex-end;
    gap: 7px 4px;
    margin-top: -17px;
  }

  .combo {
    width: 115px;
    height: 17px;
    display: flex;
    align-items: center;
    margin-left: 200px;
    padding: 0 4px;
    border: 1px solid #fafaf8;
    border-right: 2px solid #55544f;
    border-bottom: 2px solid #55544f;
  }

  .combo select {
    flex: 1;
    min-width: 0;
    appearance: none;
  }

  .actions button {
    width: 64px;
    height: 22px;
    gap: 3px;
  }

  .actions .icon {
    width: 12px;
    height: 12px;
  }

  .actions .default {
    outline: 1px solid #33332f;
    outline-offset: -1px;
  }

  /* XP taskbar */
  .taskbar {
    height: 41px;
    display: flex;
    border-top: 1px solid #0831c4;
    background: linear-gradient(#3f8cf3, #2a66e2 4px, #245edb 12px, #245edb 36px, #1941a5);
    color: #fff;
  }

  .start {
    width: 60px;
    height: 19px;
    display: flex;
    align-items: center;
    gap: 3px;
    margin-top: 2px;
    padding-left: 6px;
    border-radius: 0 5px 5px 0;
    background: linear-gradient(#6bb86b, #3a9a3c 30%, #36923a 75%, #2a7a2c);
    font: italic bold 11px/16px "Open Sans", sans-serif;
    text-shadow: 1px 1px #1c4d1c;
  }

  .start svg {
    width: 12px;
    height: 12px;
  }

  .dots {
    width: 3px;
    margin: 5px 4px 3px;
    background: radial-gradient(circle at 1px 1px, #123a9c 1px, transparent 1px) 0 0 / 3px 3px;
  }

  .quick {
    width: 88px;
    display: grid;
    grid-template-columns: repeat(6, 1fr);
    grid-template-rows: 19px 19px;
    margin: 2px 0 0;
  }

  .tasks {
    flex: 1;
    display: flex;
    gap: 1px;
    padding-top: 4px;
  }

  .tasks button {
    flex: 0 1 99px;
    min-width: 0;
    height: 15px;
    display: flex;
    align-items: center;
    gap: 3px;
    padding-left: 6px;
    border-radius: 1px;
    background: linear-gradient(#5c9bf8, #3c80f2 30%, #3b7ef0);
  }

  .tasks .active {
    background: #1c4eb4;
    box-shadow: inset 1px 1px #153d92;
  }

  .lang {
    align-self: center;
    margin: 0 13px 0 0;
    padding: 0 1px;
    background: #316ac5;
  }

  .tray {
    width: 93px;
    display: flex;
    border-left: 1px solid #0b3f9c;
    background: linear-gradient(#2fb3f5, #1290e8 6px, #128ce6 34px, #0f6ac0);
  }

  .tray-icons {
    display: grid;
    grid-template-columns: repeat(3, 10px);
    grid-template-rows: repeat(3, 10px);
    gap: 2px;
    padding: 3px 0 0 5px;
  }

  .en {
    background: #8f8d88;
    text-align: center;
  }

  .tray-clock {
    flex: 1;
    display: flex;
    flex-direction: column;
    align-items: center;
    gap: 2px;
    padding-top: 3px;
  }
</style>
